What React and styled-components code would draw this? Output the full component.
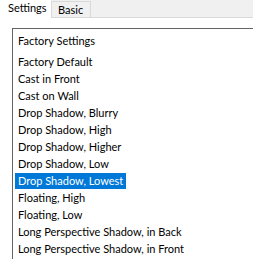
import React from 'react'
import styled, { createGlobalStyle } from 'styled-components'

const GlobalStyle = createGlobalStyle`
  html, body { margin: 0; padding: 0; background: #fff; }
  body { font-family: Lato, "Noto Sans", sans-serif; font-size: 11px; color: #000; }
`

const presets = [
  'Factory Default',
  'Cast in Front',
  'Cast on Wall',
  'Drop Shadow, Blurry',
  'Drop Shadow, High',
  'Drop Shadow, Higher',
  'Drop Shadow, Low',
  'Drop Shadow, Lowest',
  'Floating, High',
  'Floating, Low',
  'Long Perspective Shadow, in Back',
  'Long Perspective Shadow, in Front',
]

const Window = styled.div`
  width: 253px;
  height: 259px;
  overflow: hidden;
  background: #fff;
`

const TabStrip = styled.div`
  display: flex;
  align-items: flex-end;
  height: 17px;
  background: #f0f0f0;
  border-bottom: 1px solid #d9d9d9;
`

const Tab = styled.div`
  box-sizing: border-box;
  width: ${p => p.w}px;
  height: ${p => (p.active ? 18 : 16)}px;
  margin-bottom: ${p => (p.active ? -1 : 0)}px;
  padding: ${p => (p.active ? '0 0 0 7px' : '1px 0 0 6px')};
  background: ${p => (p.active ? '#fff' : '#f0f0f0')};
  border: 1px solid ${p => (p.active ? '#fff' : '#d9d9d9')};
  border-bottom: none;
  line-height: 14px;
`

const Body = styled.div`
  padding: 10px 0 0 12px;
`

const ListBox = styled.div`
  border-top: 1px solid #646464;
  border-left: 1px solid #646464;
  padding: 3px 0 0 2px;
  height: 240px;
`

const Header = styled.div`
  height: 17px;
  line-height: 17px;
  padding-left: 3px;
  margin-bottom: 4px;
`

const Row = styled.div`
  height: 17px;
`

const Item = styled.div`
  display: inline-block;
  height: 16px;
  margin-top: 1px;
  line-height: 15px;
  padding: 0 3px;
  background: ${p => (p.selected ? '#0078d7' : 'transparent')};
  color: ${p => (p.selected ? '#fff' : '#000')};
`

export default function App() {
  return (
    <Window>
      <GlobalStyle />
      <TabStrip>
        <Tab active w={51}>Settings</Tab>
        <Tab w={40}>Basic</Tab>
      </TabStrip>
      <Body>
        <ListBox>
          <Header>Factory Settings</Header>
          {presets.map(name => (
            <Row key={name}>
              <Item selected={name === 'Drop Shadow, Lowest'}>{name}</Item>
            </Row>
          ))}
        </ListBox>
      </Body>
    </Window>
  )
}
